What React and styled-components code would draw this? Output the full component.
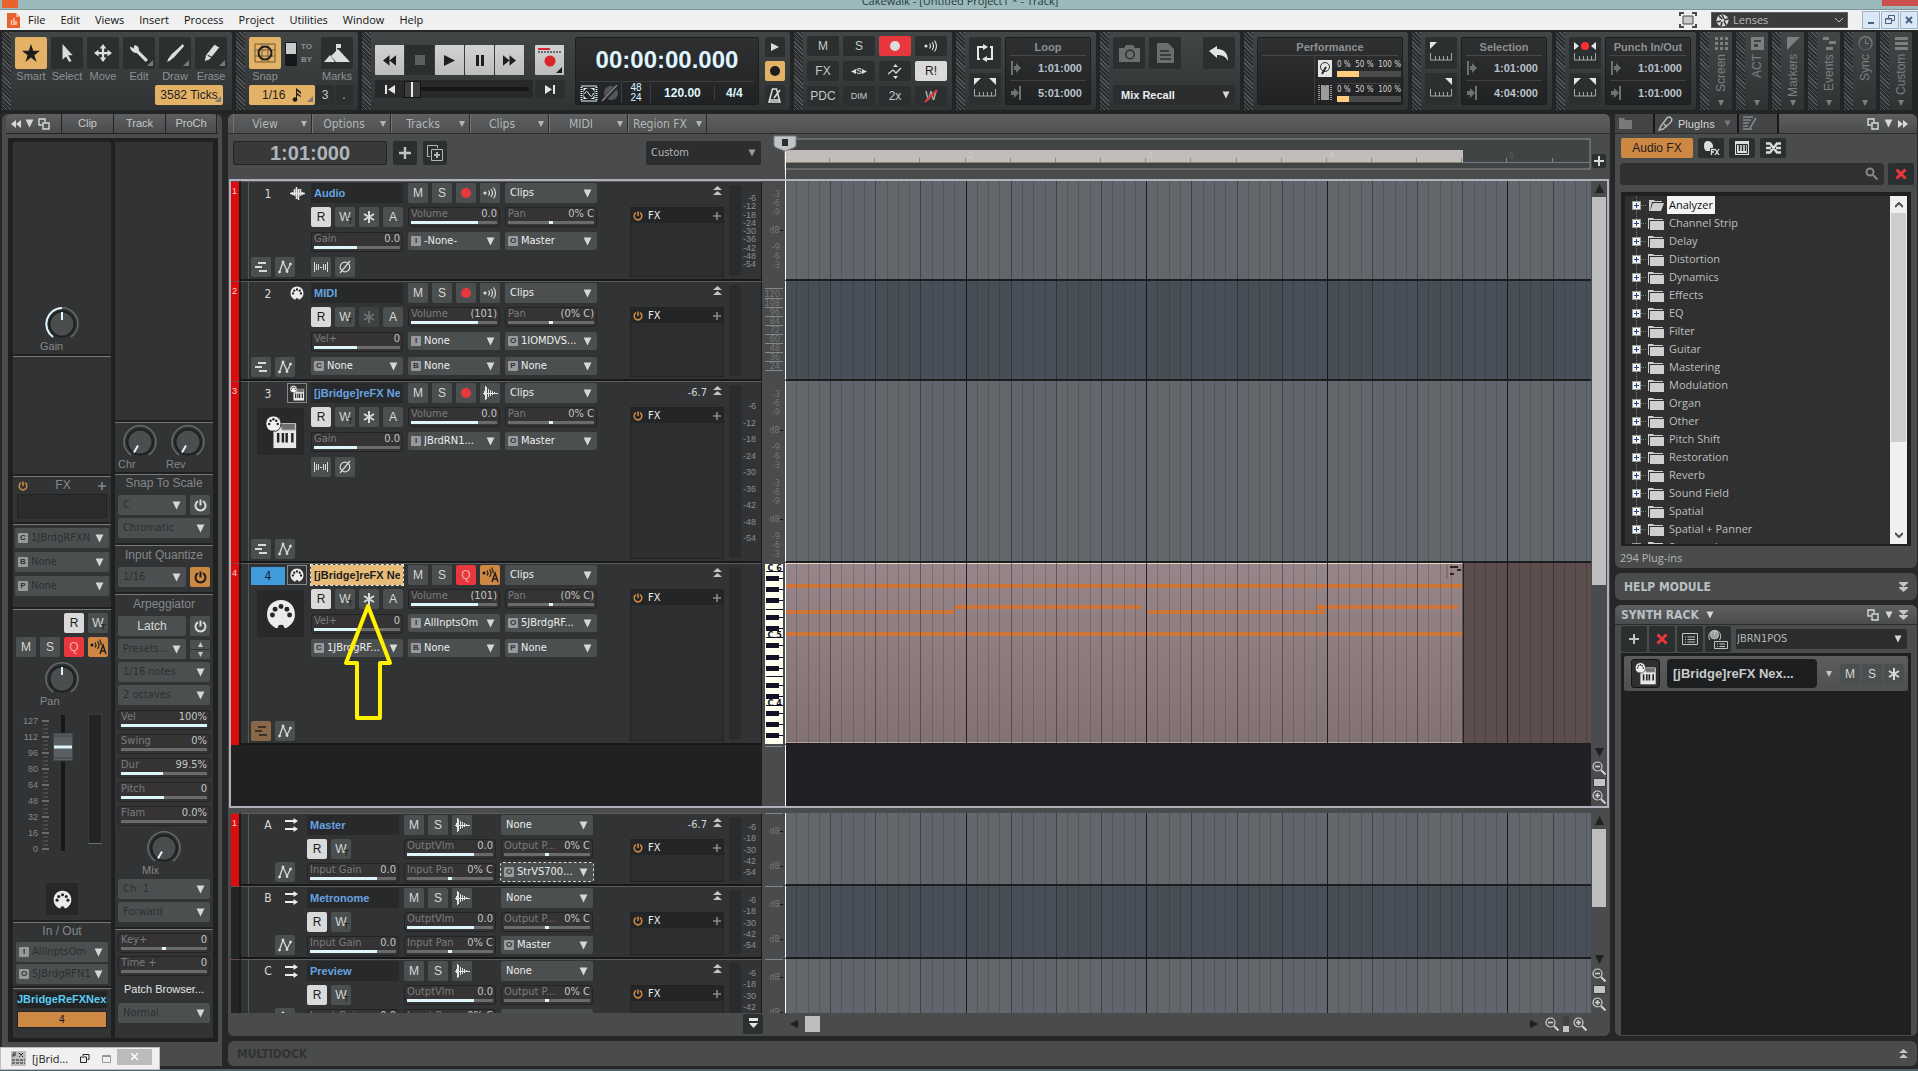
import React from "react";
import styled, { createGlobalStyle, css } from "styled-components";

const ui = `"DejaVu Sans Condensed", "Noto Sans", sans-serif`;
const arial = `"Liberation Sans", sans-serif`;
const segoe = `"Open Sans", "Noto Sans", sans-serif`;

const GlobalStyle = createGlobalStyle`
  * { box-sizing: border-box; }
  body {
    margin: 0;
    background: #262728;
    font-family: ${ui};
    font-size: 11px;
    color: #d4d6d6;
  }
  button, input, select {
    font: inherit;
    color: inherit;
    border: 0;
    margin: 0;
    padding: 0;
    background: none;
  }
  select { appearance: none; }
  svg { display: block; flex: none; }
`;

/* ---------- icons ---------- */

const Down = ({ s = 9, c = "#d6d8d8" }) => (
  <svg width={s} height={s} viewBox="0 0 8 8">
    <path d="M0.5 0.5h7L4 7.5z" fill={c} />
  </svg>
);

const Tri = ({ dir = "up", s = 10, c = "#1f2020" }) => {
  const d = {
    up: "M5 0L10 10H0z",
    down: "M0 0h10L5 10z",
    left: "M10 0v10L0 5z",
    right: "M0 0l10 5L0 10z",
  };
  return (
    <svg width={s} height={s} viewBox="0 0 10 10">
      <path d={d[dir]} fill={c} />
    </svg>
  );
};

const Power = ({ c = "#d8dada", s = 13 }) => (
  <svg width={s} height={s} viewBox="0 0 13 13" fill="none" stroke={c} strokeWidth="2">
    <path d="M4 2.2a5 5 0 1 0 5 0M6.5 0.5v6" />
  </svg>
);

const Plus = ({ c = "#d8dada", s = 10, w = 2 }) => (
  <svg width={s} height={s} viewBox="0 0 10 10" stroke={c} strokeWidth={w}>
    <path d="M5 0v10M0 5h10" />
  </svg>
);

const Cross = () => (
  <svg width="12" height="12" viewBox="0 0 12 12" stroke="#e8383d" strokeWidth="3">
    <path d="M1.5 1.5l9 9M10.5 1.5l-9 9" />
  </svg>
);

const Star = ({ c = "#d8dada" }) => (
  <svg width="12" height="12" viewBox="0 0 12 12" stroke={c} strokeWidth="2">
    <path d="M6 0v12M1 3l10 6M11 3L1 9" />
  </svg>
);

const Echo = ({ c = "#d8dada" }) => (
  <svg width="14" height="12" viewBox="0 0 14 12" fill="none" stroke={c} strokeWidth="1.2">
    <circle cx="2" cy="6" r="1.6" fill={c} stroke="none" />
    <path d="M5.5 3.5q2 2.5 0 5M8 2q3 4 0 8M10.5 0.5q4 5.5 0 11" />
  </svg>
);

const EchoAuto = () => (
  <svg width="17" height="16" viewBox="0 0 17 16" fill="none" stroke="#1d1d1d" strokeWidth="1.2">
    <circle cx="2" cy="6" r="1.6" fill="#1d1d1d" stroke="none" />
    <path d="M5 3.5q2 2.5 0 5M7.5 2q3 4 0 8M9.5 0.5q2 2.5 1.6 5.5" />
    <path d="M10 15L13 6l3 9M11 12h4" strokeWidth="1.4" />
  </svg>
);

const Wave = () => (
  <svg width="15" height="14" viewBox="0 0 15 14" stroke="#e4e6e6">
    <path d="M0 7.5h15M1.5 5v4M2.5 0v14M3.5 1v12M5.5 3v8M7.5 4v6M9.5 5v4M11.5 6v2" />
  </svg>
);

const AudioWave = () => (
  <svg width="15" height="14" viewBox="0 0 15 14" stroke="#e4e6e6">
    <path d="M0 7.5h15M2.5 6v3M4.5 3v7M6.5 1v12M8.5 3v11M10.5 3v7M12.5 6v3" strokeWidth="1.6" />
  </svg>
);

const Midi = ({ s = 14 }) => (
  <svg width={s} height={s} viewBox="0 0 28 28">
    <path d="M14 1C6 1 1 7 1 14.5 1 21 5 25 9 27h2q0-3 3-3t3 3h2c4-2 8-6 8-12.5C27 7 22 1 14 1z" fill="#ececec" />
    <g fill="#262728">
      <circle cx="6" cy="15" r="2.3" />
      <circle cx="8.5" cy="9.5" r="2.3" />
      <circle cx="14" cy="7" r="2.3" />
      <circle cx="19.5" cy="9.5" r="2.3" />
      <circle cx="22" cy="15" r="2.3" />
    </g>
  </svg>
);

const Synth = ({ s = 34 }) => (
  <svg width={s} height={s} viewBox="0 0 34 36">
    <path d="M9 9h24v26H9z" fill="#e8e8e8" />
    <path d="M16 9h16v7H18z" fill="#6d6f70" stroke="#b9baba" />
    <path d="M14 19v10M19 19v10M23 19v10M29 19v10" stroke="#242526" strokeWidth="2.6" />
    <path d="M9 1C4 1 1 5 1 9s2 7 5 8h6c3-1 5-4 5-8s-3-8-8-8z" fill="#f2f2f2" stroke="#262728" />
    <g fill="#262728">
      <circle cx="4.5" cy="9.5" r="1.3" />
      <circle cx="6" cy="6" r="1.3" />
      <circle cx="9" cy="4.5" r="1.3" />
      <circle cx="12" cy="6" r="1.3" />
      <circle cx="13.5" cy="9.5" r="1.3" />
    </g>
  </svg>
);

const Lanes = ({ c = "#d8dada" }) => (
  <svg width="12" height="10" viewBox="0 0 12 10" stroke={c} strokeWidth="2">
    <path d="M3 1h8M0 5h7M4 9h8" />
  </svg>
);

const Envelope = () => (
  <svg width="14" height="14" viewBox="0 0 14 14" stroke="#d8dada" fill="#d8dada">
    <path d="M1.5 12L5 2l4 9 3.5-7" fill="none" strokeWidth="1.3" />
    <circle cx="1.5" cy="12" r="1" />
    <circle cx="5" cy="2" r="1" />
    <circle cx="9" cy="11.5" r="1" />
    <circle cx="12.5" cy="4" r="1" />
  </svg>
);

const Interleave = () => (
  <svg width="14" height="10" viewBox="0 0 14 10" stroke="#d8dada">
    <path d="M0.5 0v10M2.5 2v6M4.5 2v6M6 5.5h2M9.5 2v6M11.5 2v6M13.5 0v10" fill="none" />
  </svg>
);

const Phase = () => (
  <svg width="12" height="14" viewBox="0 0 12 14" stroke="#d8dada" fill="none" strokeWidth="1.2">
    <circle cx="6" cy="7" r="4.8" />
    <path d="M1 13L11 1" />
  </svg>
);

const Bus = () => (
  <svg width="13" height="14" viewBox="0 0 13 14" stroke="#ececec" fill="#ececec">
    <path d="M0 3h9M0 11h9" strokeWidth="2" />
    <path d="M8.5 0L13 3 8.5 6zM8.5 8l4.5 3-4.5 3z" stroke="none" />
  </svg>
);

const Collapse = ({ down, c = "#c3c5c5" }) => (
  <svg width="9" height="10" viewBox="0 0 9 10" fill={c}>
    <path
      d={down ? "M0 0h9v1L4.5 5 0 1zM0 5h9v1L4.5 10 0 6z" : "M4.5 0L9 4H0zM4.5 5L9 9H0z"}
    />
  </svg>
);

const Windows = ({ c = "#d8dada" }) => (
  <svg width="12" height="12" viewBox="0 0 12 12" fill="none" stroke={c} strokeWidth="1.4">
    <path d="M4 7H1V1h6v3M5 5h6v6H5z" />
  </svg>
);

const Chevrons = ({ right, c = "#d8dada", s = 10 }) => (
  <svg width={s} height={s} viewBox="0 0 10 8" fill={c}>
    <path d={right ? "M0 0l5 4-5 4zM5 0l5 4-5 4z" : "M5 0v8L0 4zM10 0v8L5 4z"} />
  </svg>
);

const Zoom = ({ inside }) => (
  <svg width="14" height="14" viewBox="0 0 14 14" fill="none" stroke="#d0d2d2">
    <circle cx="5.5" cy="5.5" r="4.5" strokeWidth="1.2" />
    <path d="M9 9l4.5 4.5" strokeWidth="2" />
    <path d={inside ? "M3 5.5h5M5.5 3v5" : "M3 5.5h5"} strokeWidth="1.6" />
  </svg>
);

const Folder = ({ open }) => (
  <svg width="17" height="13" viewBox="0 0 17 13">
    {open ? (
      <>
        <path d="M1 12V1h5l1 1h7v1H4L2 12z" fill="#cfcfcf" />
        <path d="M5 4h11l-3 8H2z" fill="#cfcfcf" />
      </>
    ) : (
      <>
        <path d="M0 12V1h5l1 1h9v1H1v9z" fill="#cfcfcf" />
        <path d="M2 4h14v9H2z" fill="#cfcfcf" />
      </>
    )}
  </svg>
);

const Edge = ({ end }) => (
  <svg width="10" height="14" viewBox="0 0 10 14" fill="#6f7273">
    {end ? <path d="M0 5h3V2l5 5-5 5V9H0zM8 0h2v14H8z" /> : <path d="M0 0h2v14H0zM3 5h2V2l5 5-5 5V9H3z" />}
  </svg>
);

const RangeIcon = ({ left, right, dot }) => (
  <svg width="22" height="22" viewBox="0 0 22 22">
    {left && <path d={dot ? "M0 0l5 4-5 4z" : "M0 0h7L0 7z"} fill="#e4e6e6" />}
    {right && <path d={dot ? "M22 0l-5 4 5 4z" : "M22 0h-7l7 7z"} fill="#e4e6e6" />}
    {dot && <circle cx="11" cy="4" r="4" fill="#ff2d32" />}
    <path d="M0.5 11v7h21v-7M5.5 14v4M9.5 14v4M13.5 14v4M17.5 14v4" stroke="#a7a9a9" fill="none" />
  </svg>
);

/* ---------- shared controls ---------- */

const Pad = styled.button`
  width: ${(p) => p.$w || 20}px;
  height: ${(p) => p.$h || 20}px;
  flex: none;
  display: flex;
  align-items: center;
  justify-content: center;
  border-radius: 2px;
  position: relative;
  font-family: ${arial};
  font-size: 12px;
  color: #d6d8d8;
  background: #4c4f50;
  ${(p) =>
    p.$tone &&
    {
      lit: css`background: #dadada; color: #1d1d1d;`,
      red: css`background: #e8383d; color: #f7a9a9;`,
      orange: css`background: #cd8843; color: #1d1d1d;`,
      sand: css`background: #e4b266; color: #1d1d1d;`,
      brown: css`background: #8a6746; color: #4a3c30;`,
      dark: css`background: #2c2f30; color: #c6c8c8;`,
      off: css`background: #3e4142; color: #6c6f70;`,
    }[p.$tone]}
`;

const RecDot = styled.span`
  width: 10px;
  height: 10px;
  border-radius: 50%;
  background: ${(p) => p.$c || "#e8383d"};
`;

const Trim = styled.sub`
  position: absolute;
  right: 2px;
  bottom: 1px;
  font-size: 9px;
  line-height: 9px;
  color: #232425;
`;

const SelectBox = styled.span`
  display: flex;
  align-items: center;
  gap: 3px;
  height: ${(p) => p.$h || 20}px;
  min-width: 0;
  flex: ${(p) => (p.$grow ? 1 : "none")};
  padding: 0 5px 0 ${(p) => (p.$badge ? 3 : 5)}px;
  border-radius: 2px;
  background: ${(p) => (p.$dark ? "#2b2d2e" : "#4c4f50")};
  color: ${(p) => (p.$dim ? "#2c2f31" : "#eceeee")};
  outline: ${(p) => (p.$focus ? "1px dashed #d4d6d6" : "none")};
  select {
    flex: 1;
    min-width: 0;
    width: 20px;
    line-height: 16px;
    white-space: nowrap;
  }
`;

const Badge = styled.b`
  width: 10px;
  height: 10px;
  flex: none;
  border-radius: 1px;
  background: #97999a;
  color: #323334;
  font: bold 8px/10px ${arial};
  text-align: center;
`;

const Select = ({ badge, value, label, ...rest }) => (
  <SelectBox $badge={badge} {...rest}>
    {badge && <Badge>{badge}</Badge>}
    <select aria-label={label || value}>
      <option>{value}</option>
    </select>
    <Down />
  </SelectBox>
);

const SliderBox = styled.div`
  height: 20px;
  min-width: 0;
  padding: 0 2px;
  border: 1px solid #222324;
  border-radius: 3px;
  background: #353334;
  div {
    display: flex;
    justify-content: space-between;
    height: 13px;
    line-height: 11px;
    white-space: nowrap;
  }
  label { color: #7a7d7e; }
  output { color: #c3c5c5; }
  input {
    display: block;
    appearance: none;
    width: 100%;
    height: 3px;
    background: linear-gradient(
      90deg,
      #6b6b6b ${(p) => p.$from}%,
      #dff5fc ${(p) => p.$from}%,
      #dff5fc ${(p) => p.$to}%,
      #6b6b6b ${(p) => p.$to}%
    );
  }
  input::-webkit-slider-thumb {
    appearance: none;
    width: 1px;
    height: 1px;
  }
`;

const Slider = ({ name, value, from = 0, to = 50 }) => {
  const id = React.useId();
  return (
    <SliderBox $from={from} $to={to}>
      <div>
        <label htmlFor={id}>{name}</label>
        <output>{value}</output>
      </div>
      <input id={id} type="range" defaultValue={to} />
    </SliderBox>
  );
};

/* ---------- title and menu ---------- */

const TitleBar = styled.header`
  height: 10px;
  overflow: hidden;
  display: flex;
  justify-content: space-between;
  background: #9bb8bb;
  border-bottom: 1px solid #7d9698;
  color: #26383a;
  font: 11px/17px ${segoe};
  h1 {
    margin: -8px 0 0 20px;
    font: inherit;
  }
`;

const AppIcon = styled.span`
  width: 16px;
  height: 8px;
  margin-left: 2px;
  background: #e8622c;
`;

const CloseStub = styled.span`
  width: 36px;
  height: 6px;
  background: #c9504f;
`;

const MenuBar = styled.nav`
  height: 20px;
  display: flex;
  align-items: center;
  gap: 8px;
  padding-left: 7px;
  background: #f0f0f0;
  color: #111;
  font: 11px/18px ${segoe};
`;

const MenuLinks = styled.div`
  display: flex;
  gap: 15px;
  a {
    color: inherit;
    text-decoration: none;
  }
`;

const LensGroup = styled.div`
  margin-left: auto;
  display: flex;
  align-items: center;
  gap: 14px;
`;

const LensBox = styled.span`
  width: 137px;
  height: 16px;
  display: flex;
  align-items: center;
  gap: 4px;
  padding: 0 4px;
  background: #3b3b3b;
  border: 1px solid #5d5d5d;
  color: #bcbcbc;
  select { flex: 1; }
`;

const WinButtons = styled.div`
  display: flex;
  gap: 1px;
  button {
    width: 18px;
    height: 18px;
    border: 1px solid #9eb4c8;
    background: #dbe8f5;
    display: flex;
    align-items: center;
    justify-content: center;
  }
`;

const menus = ["File", "Edit", "Views", "Insert", "Process", "Project", "Utilities", "Window", "Help"];

const Menu = () => (
  <MenuBar>
    <svg width="13" height="16" viewBox="0 0 13 16">
      <path d="M0 1h9l4 4v11H0z" fill="#e8622c" />
      <path d="M9 1v4h4z" fill="#f6b294" />
      <path d="M4.5 8v5M7 6v7M9 9v4" stroke="#fbd6c4" strokeWidth="1.4" />
    </svg>
    <MenuLinks>
      {menus.map((m) => (
        <a href="#menu" key={m}>{m}</a>
      ))}
    </MenuLinks>
    <LensGroup>
      <svg width="18" height="16" viewBox="0 0 18 16" fill="none" stroke="#4a4a4a" strokeWidth="2">
        <path d="M1 4V1h4M13 1h4v3M17 12v3h-4M5 15H1v-3" />
        <path d="M4 4h10v8H4z" fill="#c9c9c9" strokeWidth="1" />
      </svg>
      <LensBox>
        <svg width="13" height="13" viewBox="0 0 13 13">
          <circle cx="6.5" cy="6.5" r="6" fill="#d8d8d8" />
          <path d="M6 1l2 4M12 5L8 6M10 11L8 7M5 12l1-4M1 8l4-1M3 2l3 3" stroke="#3b3b3b" strokeWidth="1.6" />
        </svg>
        <select aria-label="Lenses">
          <option>Lenses</option>
        </select>
        <svg width="8" height="5" viewBox="0 0 8 5" fill="none" stroke="#bcbcbc">
          <path d="M0 0l4 4 4-4" />
        </svg>
      </LensBox>
      <WinButtons>
        <button aria-label="Minimize">
          <svg width="8" height="8"><path d="M1 7h6" stroke="#47617e" strokeWidth="2" /></svg>
        </button>
        <button aria-label="Restore">
          <svg width="10" height="10" fill="none" stroke="#47617e">
            <path d="M3.5 3V0.5h6v5H7M0.5 3.5h6v5h-6zM0 4h7" />
          </svg>
        </button>
        <button aria-label="Close">
          <svg width="8" height="8" stroke="#47617e" strokeWidth="2"><path d="M1 1l6 6M7 1L1 7" /></svg>
        </button>
      </WinButtons>
    </LensGroup>
  </MenuBar>
);

/* ---------- control bar ---------- */

const Bar = styled.section`
  display: flex;
  gap: 4px;
  padding: 2px 2px 4px;
  background: #232425;
  font-family: ${arial};
`;

const ModuleBox = styled.div`
  display: flex;
  width: ${(p) => p.$w}px;
  height: 78px;
  flex: none;
  border-radius: 2px;
  background: linear-gradient(#434647, #303334);
`;

const Grip = styled.span`
  width: 9px;
  flex: none;
  background: repeating-linear-gradient(45deg, #55585a 0 1px, #2b2d2e 1px 3px);
`;

const ModuleBody = styled.div`
  flex: 1;
  display: flex;
  padding: 5px 5px 5px 4px;
  gap: 4px;
  min-width: 0;
`;

const Module = ({ w, children }) => (
  <ModuleBox $w={w}>
    <Grip />
    <ModuleBody>{children}</ModuleBody>
  </ModuleBox>
);

const Stack = styled.div`
  display: flex;
  flex-direction: column;
  gap: ${(p) => p.$gap || 0}px;
  align-items: ${(p) => p.$align || "stretch"};
  justify-content: ${(p) => p.$justify || "flex-start"};
  flex: ${(p) => (p.$grow ? 1 : "none")};
  min-width: 0;
`;

const Line = styled.div`
  display: flex;
  align-items: ${(p) => p.$align || "center"};
  gap: ${(p) => p.$gap || 0}px;
  justify-content: ${(p) => p.$justify || "flex-start"};
`;

const ToolCell = styled.div`
  width: 32px;
  display: flex;
  flex-direction: column;
  align-items: center;
  font-size: 11px;
  line-height: 14px;
  color: #8d9091;
`;

const TickLine = styled(Line)`
  padding-right: 4px;
`;

const Corner = styled.i`
  position: absolute;
  right: 2px;
  bottom: 3px;
  border: 3px solid transparent;
  border-right-color: #77797a;
  border-bottom-color: #77797a;
`;

const Display = styled.div`
  flex: 1;
  min-width: 0;
  height: 68px;
  padding: 3px 4px;
  border: 1px solid #1d1e1f;
  border-radius: 2px;
  background: linear-gradient(#2f3031, #212223);
  h2 {
    margin: 0;
    height: 15px;
    border-bottom: 1px solid #454748;
    font: bold 11px/13px ${arial};
    color: #8d9091;
    text-align: center;
  }
`;

const ClockDisplay = styled(Display)`
  margin: 0 2px 0 6px;
`;

const TimeRow = styled.div`
  display: flex;
  align-items: center;
  justify-content: space-between;
  height: 24px;
  padding: 0 4px 0 1px;
  font-weight: bold;
  font-size: 11px;
  color: #b9c3cb;
  & + & { border-top: 1px solid #3d3f40; }
`;

const TimeDisplay = ({ title, from, to }) => (
  <Display>
    <h2>{title}</h2>
    <TimeRow><Edge />{from}</TimeRow>
    <TimeRow><Edge end />{to}</TimeRow>
  </Display>
);

const tools = [
  ["Smart", "M8 0l2 6h6l-5 4 2 6-5-4-5 4 2-6-5-4h6z"],
  ["Select", "M4 0l9 10H9l3 5-2 1-3-5-3 3z"],
  ["Move", "M8 0l3 4H9v3h3V5l4 3-4 3V9H9v3h2l-3 4-3-4h2V9H4v2L0 8l4-3v2h3V4H5z"],
  ["Edit", "M0 2l3 2 1-3c3 0 4 2 4 5l8 8-2 2-8-8C3 8 0 6 0 2z"],
  ["Draw", "M15 0l1 2L7 12l-4 3-2 1 1-3 3-4z"],
  ["Erase", "M11 0l5 3-9 11-5 2 1-6zM5 10l4 2"],
];

const SnapToggle = styled.button`
  width: 12px;
  height: 24px;
  margin-top: 5px;
  padding: 1px;
  border-radius: 1px;
  background: #17181a;
  display: block;
  span {
    display: block;
    height: 11px;
    margin-bottom: 11px;
    background: #c9caca;
  }
`;

const ToBy = styled.div`
  margin-top: 3px;
  width: 16px;
  font-size: 8px;
  line-height: 13px;
  font-weight: bold;
  color: #8d9091;
`;

const Transport = styled.div`
  display: flex;
  margin-top: 8px;
`;

const Play = styled(Pad)`
  width: 30px;
  height: 30px;
  border-radius: 1px;
  border-right: 1px solid #3a3d3e;
  background: ${(p) => (p.$stop ? "#2c2f30" : "linear-gradient(#d2d2d2, #bdbdbd)")};
`;

const RecordGap = styled.span`
  width: 10px;
`;

const Seek = styled.div`
  display: flex;
  align-items: center;
  gap: 9px;
  width: 158px;
  height: 18px;
  padding: 0 4px 0 10px;
  background: #27292a;
  input {
    appearance: none;
    flex: 1;
    min-width: 0;
    height: 4px;
    background: #161718;
    border-radius: 2px;
  }
  input::-webkit-slider-thumb {
    appearance: none;
    width: 17px;
    height: 17px;
    border: 1px solid #141515;
    background: linear-gradient(90deg, #3b3d3e 6px, #e8e8e8 6px 8px, #3b3d3e 8px);
  }
`;

const Clock = styled.time`
  display: block;
  height: 41px;
  border-bottom: 1px solid #3d3f40;
  font: bold 24px/38px ${arial};
  color: #dff5ff;
  text-align: center;
`;

const Tempo = styled.div`
  display: flex;
  align-items: center;
  gap: 2px;
  height: 22px;
  font-weight: bold;
  font-size: 12px;
  color: #dff5ff;
  small {
    width: 30px;
    font: 10px/10px ${arial};
    text-align: center;
    border: solid #3d3f40;
    border-width: 0 1px;
  }
  span {
    flex: 3;
    text-align: center;
  }
  span:last-child {
    flex: 2;
    border-left: 1px solid #3d3f40;
  }
`;

const MixGrid = styled.div`
  display: grid;
  grid-template-columns: repeat(4, 32px);
  grid-auto-rows: 20px;
  gap: 5px 4px;
  margin-top: -1px;
`;

const SmallPad = styled(Pad)`
  font-size: 9px;
`;

const UndoPad = styled(Pad)`
  margin-left: auto;
`;

const Strike = styled.svg`
  position: absolute;
`;

const Recall = styled(SelectBox)`
  width: 122px;
  padding-left: 8px;
  font-weight: bold;
  font-family: ${arial};
`;

const PerfRow = styled.div`
  display: flex;
  align-items: center;
  gap: 5px;
  height: 24px;
  margin-left: 52px;
  border-left: 1px solid #3d3f40;
  padding-left: 3px;
  & + & > div { border-top: 1px solid #3d3f40; }
  p {
    margin: 0;
    display: flex;
    justify-content: space-between;
    font: 8px/12px ${ui};
    color: #d4d6d6;
  }
`;

const Load = styled.progress`
  display: block;
  width: 64px;
  height: 6px;
  appearance: none;
  background: #4a4b4c;
  &::-webkit-progress-bar { background: #4a4b4c; }
  &::-webkit-progress-value { background: #ffcb7d; }
`;

const Side = styled.button`
  flex: 1;
  display: flex;
  flex-direction: column;
  align-items: center;
  justify-content: space-between;
  padding: 4px 2px 4px 3px;
  font: 12px/15px ${arial};
  color: #7b7f80;
  span {
    flex: 1;
    margin-top: 3px;
    writing-mode: vertical-rl;
    transform: rotate(180deg);
    text-align: right;
  }
`;

const sideModules = [
  ["Screen", "M1 1h3v3H1zM6 1h3v3H6zM11 1h3v3h-3zM1 6h3v3H1zM6 6h3v3H6zM11 6h3v3h-3zM1 11h3v3H1zM6 11h3v3H6zM11 11h3v3h-3z"],
  ["ACT", "M1 1h13v13H1zM4 4v2h7V4zM4 8v3h4V8z"],
  ["Markers", "M1 1h13L1 14z"],
  ["Events", "M1 1h6v3H1zM7 5h7v3H7zM4 11h7v3H4z"],
  ["Sync", "M7.5 0a7 7 0 1 0 .1 0zM7.5 1.5a6 6 0 1 1-.1 0zM7 3h1v4h3v1H7z"],
  ["Custom", "M1 1h13v3H1zM1 6h13v3H1zM1 11h13v3H1z"],
];

const ControlBar = () => (
  <Bar>
    <Module w={230}>
      <Stack $grow $gap={2}>
        <Line $gap={4}>
          {tools.map(([name, d], i) => (
            <ToolCell key={name}>
              <Pad $w={32} $h={32} $tone={i ? "dark" : "sand"} aria-label={name}>
                <svg width="18" height="18" viewBox="0 0 16 16">
                  <path d={d} fill={i ? "#dcdede" : "#1d1d1d"} stroke={name === "Erase" ? "#2c2f30" : "none"} />
                </svg>
                {i > 2 && <Corner />}
              </Pad>
              {name}
            </ToolCell>
          ))}
        </Line>
        <TickLine $justify="flex-end">
          <Pad $w={68} $tone="sand">3582 Ticks<Corner /></Pad>
        </TickLine>
      </Stack>
    </Module>

    <Module w={122}>
      <Stack $grow $gap={2}>
        <Line $align="flex-start" $gap={4}>
          <ToolCell>
            <Pad $w={32} $h={32} $tone="sand" aria-label="Snap">
              <svg width="22" height="20" viewBox="0 0 22 20" fill="none" stroke="#1d1d1d">
                <path d="M1 1h20v18H1zM1 7h20M1 13h20M8 1v18M14 1v18" stroke="#6d5a3a" />
                <circle cx="11" cy="10" r="6.5" strokeWidth="2" />
              </svg>
            </Pad>
            Snap
          </ToolCell>
          <SnapToggle aria-label="Snap to or by"><span /></SnapToggle>
          <ToBy>TO<br />BY</ToBy>
          <ToolCell>
            <Pad $w={32} $h={32} $tone="dark" aria-label="Marks">
              <svg width="26" height="20" viewBox="0 0 26 20" fill="#dcdede">
                <path d="M0 19l6-7 5 7zM7 13l7-7 12 13H12zM12 1h5v4h-4v3h-1z" />
              </svg>
            </Pad>
            Marks
          </ToolCell>
        </Line>
        <Line $gap={1}>
          <Pad $w={66} $tone="sand">
            1/16&nbsp;&nbsp;
            <svg width="10" height="14" viewBox="0 0 10 14">
              <path d="M4 11V0l5 4v2L5 3v2l4 3v1L5 7v5" fill="#1d1d1d" />
              <circle cx="3" cy="11.5" r="2.3" fill="#1d1d1d" />
            </svg>
            <Corner />
          </Pad>
          <Pad $w={18} $tone="dark">3</Pad>
          <Pad $w={18} $tone="dark">.</Pad>
        </Line>
      </Stack>
    </Module>

    <Module w={428}>
      <Stack $gap={5}>
        <Transport>
          <Play aria-label="Rewind"><Chevrons c="#1d1d1d" s={13} /></Play>
          <Play $stop aria-label="Stop">
            <svg width="10" height="10"><path d="M0 0h10v10H0z" fill="#5c5f60" /></svg>
          </Play>
          <Play aria-label="Play"><Tri dir="right" s={11} /></Play>
          <Play aria-label="Pause">
            <svg width="8" height="11"><path d="M0 0h3v11H0zM5 0h3v11H5z" fill="#1d1d1d" /></svg>
          </Play>
          <Play aria-label="Forward"><Chevrons right c="#1d1d1d" s={13} /></Play>
          <RecordGap />
          <Play aria-label="Record">
            <svg width="26" height="26" viewBox="0 0 26 26">
              <path d="M1 2h12" stroke="#d8262b" strokeWidth="2" />
              <path d="M1 5h24" stroke="#6b6d6e" strokeWidth="2" strokeDasharray="2 1" />
              <circle cx="13" cy="14" r="5.5" fill="#d8262b" />
              <path d="M25 20v6h-6z" fill="#1d1d1d" />
            </svg>
          </Play>
        </Transport>
        <Line $gap={2}>
          <Seek>
            <svg width="10" height="9" fill="#e4e6e6"><path d="M0 0h2v9H0zM10 0v9L3 4.5z" /></svg>
            <input type="range" aria-label="Song position" defaultValue="0" />
          </Seek>
          <Pad $w={30} $h={18} $tone="dark" aria-label="Go to end">
            <svg width="10" height="9" fill="#e4e6e6"><path d="M8 0h2v9H8zM0 0v9l7-4.5z" /></svg>
          </Pad>
        </Line>
      </Stack>
      <ClockDisplay>
        <Clock>00:00:00.000</Clock>
        <Tempo>
          <svg width="18" height="17" viewBox="0 0 17 17" fill="none">
            <path d="M1 1h15v15H1z" stroke="#dff5ff" strokeWidth="2" strokeDasharray="1 1" />
            <path d="M3 3h11v11H3z" fill="#dff5ff" />
            <circle cx="8.5" cy="8.5" r="5.5" fill="#242526" />
            <path d="M4 9q2-5 4.5 0t4.5-1" stroke="#dff5ff" />
          </svg>
          <svg width="19" height="17" viewBox="0 0 19 17">
            <circle cx="11" cy="8" r="7" fill="#55585a" />
            <path d="M3 16L17 1" stroke="#242526" strokeWidth="4" />
            <path d="M2 16L17 0" stroke="#85888a" strokeWidth="1.5" />
          </svg>
          <small>48<br />24</small>
          <span>120.00</span>
          <span>4/4</span>
        </Tempo>
      </ClockDisplay>
      <Stack $gap={4}>
        <Pad $tone="dark" aria-label="Play metronome"><Tri dir="right" s={8} c="#dcdede" /></Pad>
        <Pad $tone="sand" aria-label="Record metronome"><RecDot $c="#1d1d1d" /></Pad>
        <Pad $tone="dark" aria-label="Metronome">
          <svg width="14" height="15" viewBox="0 0 14 15" fill="none" stroke="#dcdede" strokeWidth="1.5">
            <path d="M4.5 1h4L12 14H1zM6 10l6-8M2 12h10" />
          </svg>
        </Pad>
      </Stack>
    </Module>

    <Module w={158}>
      <MixGrid>
        <Pad $w={32} $tone="dark">M</Pad>
        <Pad $w={32} $tone="dark">S</Pad>
        <Pad $w={32} $tone="red" aria-label="Arm"><RecDot $c="#dcdcdc" /></Pad>
        <Pad $w={32} $tone="dark" aria-label="Input echo"><Echo /></Pad>
        <Pad $w={32} $tone="dark">FX</Pad>
        <SmallPad $w={32} $tone="dark" aria-label="Solo override">
          <Tri dir="left" s={5} c="#dcdede" /><b>S</b><Tri dir="right" s={5} c="#dcdede" />
        </SmallPad>
        <Pad $w={32} $tone="dark" aria-label="Offset">
          <svg width="14" height="15" viewBox="0 0 14 15" fill="#dcdede">
            <path d="M5 3l2.5-3L10 3zM5 12h5l-2.5 3z" />
            <path d="M0 10l5-4 3 3 5-5" fill="none" stroke="#dcdede" strokeWidth="1.3" />
          </svg>
        </Pad>
        <Pad $w={32} $tone="lit">R!</Pad>
        <Pad $w={32} $tone="dark">PDC</Pad>
        <SmallPad $w={32} $tone="dark">DIM</SmallPad>
        <Pad $w={32} $tone="dark">2x</Pad>
        <Pad $w={32} $tone="dark" aria-label="Write off">
          W
          <Strike width="16" height="14"><path d="M2 13L14 1" stroke="#e8383d" strokeWidth="2" /></Strike>
        </Pad>
      </MixGrid>
    </Module>

    <Module w={140}>
      <Stack $gap={4}>
        <Pad $w={32} $h={32} $tone="dark" aria-label="Loop">
          <svg width="20" height="18" viewBox="0 0 18 18" fill="none" stroke="#e4e6e6" strokeWidth="2">
            <path d="M8 3H2v12h2M14 3h2v12h-6" />
            <path d="M7 0l5 3-5 3zM11 12l-5 3 5 3z" fill="#e4e6e6" stroke="none" />
          </svg>
        </Pad>
        <Pad $w={32} $h={32} $tone="dark" aria-label="Loop selection"><RangeIcon left right /></Pad>
      </Stack>
      <TimeDisplay title="Loop" from="1:01:000" to="5:01:000" />
    </Module>

    <Module w={140}>
      <Stack $grow $justify="space-between">
        <Line $gap={4}>
          <Pad $w={32} $h={32} $tone="dark" aria-label="Snapshot">
            <svg width="21" height="17" viewBox="0 0 21 17" fill="#6b6e6f">
              <path d="M0 3h5l2-3h7l2 3h5v14H0z" />
              <circle cx="11" cy="9.5" r="5" fill="#2c2f30" />
              <circle cx="11" cy="9.5" r="3.5" />
            </svg>
          </Pad>
          <Pad $w={32} $h={32} $tone="dark" aria-label="Notes">
            <svg width="17" height="20" viewBox="0 0 17 20">
              <path d="M0 0h11l6 6v14H0z" fill="#6b6e6f" />
              <path d="M3 8h9M3 12h11M3 16h11" stroke="#2c2f30" strokeWidth="1.5" />
            </svg>
          </Pad>
          <UndoPad $w={32} $h={32} $tone="dark" aria-label="Undo">
            <svg width="20" height="15" viewBox="0 0 20 15" fill="#e4e6e6">
              <path d="M0 5l8-5v3c8 0 11 5 11 12-2-4-5-6-11-6v3z" />
            </svg>
          </UndoPad>
        </Line>
        <Recall $dark>
          <select aria-label="Mix Recall"><option>Mix Recall</option></select>
          <Down s={8} />
        </Recall>
      </Stack>
    </Module>

    <Module w={164}>
      <Display>
        <h2>Performance</h2>
        <PerfRow>
          <svg width="14" height="17" viewBox="0 0 14 17">
            <path d="M0 0h14v17H0z" fill="#e4e6e6" />
            <circle cx="7" cy="7" r="4.5" fill="none" stroke="#2a2b2c" />
            <path d="M4 14l4-7" stroke="#2a2b2c" strokeWidth="2" />
          </svg>
          <div>
            <p><span>0 %</span><span>50 %</span><span>100 %</span></p>
            <Load value="0.34" aria-label="Disk load" />
          </div>
        </PerfRow>
        <PerfRow>
          <svg width="14" height="17" viewBox="0 0 14 17">
            <path d="M3 1h3l1 1 1-1h3v15H3z" fill="#9a9c9c" />
            <path d="M1 1v15M13 1v15" stroke="#9a9c9c" strokeWidth="2" strokeDasharray="1 1" />
          </svg>
          <div>
            <p><span>0 %</span><span>50 %</span><span>100 %</span></p>
            <Load value="0.18" aria-label="CPU load" />
          </div>
        </PerfRow>
      </Display>
    </Module>

    <Module w={140}>
      <Stack $gap={4}>
        <Pad $w={32} $h={32} $tone="dark" aria-label="Selection from"><RangeIcon left /></Pad>
        <Pad $w={32} $h={32} $tone="dark" aria-label="Selection thru"><RangeIcon right /></Pad>
      </Stack>
      <TimeDisplay title="Selection" from="1:01:000" to="4:04:000" />
    </Module>

    <Module w={140}>
      <Stack $gap={4}>
        <Pad $w={32} $h={32} $tone="dark" aria-label="Punch"><RangeIcon left right dot /></Pad>
        <Pad $w={32} $h={32} $tone="dark" aria-label="Punch range"><RangeIcon left right /></Pad>
      </Stack>
      <TimeDisplay title="Punch In/Out" from="1:01:000" to="1:01:000" />
    </Module>

    {sideModules.map(([name, d]) => (
      <ModuleBox $w={32} key={name}>
        <Grip />
        <Side>
          <svg width="15" height="15" viewBox="0 0 15 15" fillRule="evenodd">
            <path d={d} fill="#7b7f80" />
          </svg>
          <span>{name}</span>
          <Tri dir="down" s={6} c="#7b7f80" />
        </Side>
      </ModuleBox>
    ))}
  </Bar>
);

/* ---------- inspector ---------- */

const Inspector = styled.aside`
  width: 220px;
  flex: none;
  display: flex;
  flex-direction: column;
  border-radius: 6px 6px 0 0;
  background: #4a4c4b;
`;

const InspectorTabs = styled.div`
  height: 20px;
  display: flex;
  margin: 0 4px;
  border-bottom: 1px solid #222324;
  border-radius: 6px 6px 0 0;
  background: linear-gradient(#5d5f61, #4a4c4d);
  div {
    width: 55px;
    display: flex;
    align-items: center;
    gap: 4px;
    padding-left: 5px;
  }
  button {
    width: 52px;
    border-left: 1px solid #222324;
    font: 11px/19px ${arial};
    color: #c6c8c8;
  }
  button:last-child { border-right: 1px solid #222324; }
`;

const Strips = styled.div`
  flex: 1;
  display: flex;
  gap: 4px;
  margin: 4px 4px 24px 6px;
  padding: 4px 5px;
  background: #1f2020;
`;

const StripCol = styled.div`
  flex: 1;
  min-width: 0;
  display: flex;
  flex-direction: column;
  gap: 2px;
`;

const Sect = styled.section`
  display: flex;
  flex-direction: column;
  gap: ${(p) => p.$gap || 0}px;
  flex: ${(p) => (p.$grow ? 1 : "none")};
  justify-content: ${(p) => (p.$grow ? "flex-end" : "flex-start")};
  min-height: ${(p) => p.$min || 0}px;
  padding: ${(p) => p.$pad || "0 3px 5px"};
  border-top: 1px solid ${(p) => (p.$grow ? "#323334" : "#77797a")};
  background: #323334;
  h3 {
    margin: 0;
    font: 12px/17px ${arial};
    color: #85888a;
    text-align: center;
  }
`;

const KnobBox = styled.figure`
  margin: 0 auto;
  width: 36px;
  figcaption {
    margin-left: -4px;
    font: 11px/12px ${arial};
    color: #85888a;
  }
`;

const Knob = ({ name, angle = 0, arc }) => (
  <KnobBox>
    <svg width="36" height="34" viewBox="0 0 36 34" fill="none">
      <path d="M9 31A16 16 0 1 1 27 31" stroke="#66696a" strokeWidth="1.6" />
      {arc && <path d="M9 31A16 16 0 0 1 18 2" stroke="#dff5ff" strokeWidth="2" />}
      <circle cx="18" cy="18" r="13.5" fill="#1e1f20" />
      <circle cx="18" cy="18" r="11.5" fill="#4b4e4f" />
      <path d="M18 6v8" stroke="#dff5ff" strokeWidth="2" transform={`rotate(${angle} 18 18)`} />
    </svg>
    <figcaption>{name}</figcaption>
  </KnobBox>
);

const FxHead = styled.div`
  display: flex;
  justify-content: space-between;
  align-items: center;
  height: 17px;
  padding: 0 2px;
  font: 12px/17px ${arial};
  color: #85888a;
`;

const FxSlot = styled.div`
  height: 24px;
  margin: 0 1px;
  border: 1px solid #222324;
  background: #2b2c2d;
`;

const FaderArea = styled.div`
  display: flex;
  height: 146px;
  padding-left: 8px;
`;

const FaderScale = styled.svg`
  overflow: visible;
  text {
    font: 9px ${arial};
    fill: #85888a;
    text-anchor: end;
  }
`;

const FaderMeter = styled.div`
  width: 14px;
  flex: none;
  height: 130px;
  margin: 3px 0 0 3px;
  border: 1px solid #3a3b3c;
  border-bottom-color: #6c6f70;
  background: #232425;
`;

const MidiTile = styled.div`
  width: 32px;
  height: 32px;
  margin: 22px auto 4px;
  display: flex;
  align-items: center;
  justify-content: center;
  background: #262728;
`;

const StripName = styled.div`
  height: 17px;
  margin: 0 1px;
  overflow: hidden;
  white-space: nowrap;
  background: #232425;
  color: #5ccdf5;
  font: bold 11px/17px ${arial};
`;

const StripNumber = styled.div`
  height: 17px;
  margin: 3px 1px 3px;
  background: #cd8843;
  color: #1d1d1d;
  text-align: center;
  line-height: 15px;
  border: 1px solid #222324;
`;

const Spin = styled.div`
  display: flex;
  flex-direction: column;
  gap: 1px;
  button {
    width: 20px;
    height: 9px;
    display: flex;
    align-items: center;
    justify-content: center;
    background: #4c4f50;
  }
`;

const ArpSliders = styled(Stack)`
  margin: 2px 0 1px;
`;

const Patch = styled.button`
  height: 21px;
  font: 11px/21px ${arial};
  color: #e4e6e6;
  text-align: center;
`;

const faderMarks = [127, 112, 96, 80, 64, 48, 32, 16, 0];

const InspectorPane = () => (
  <Inspector>
    <InspectorTabs>
      <div><Chevrons /><Down /><Windows /></div>
      <button>Clip</button>
      <button>Track</button>
      <button>ProCh</button>
    </InspectorTabs>
    <Strips>
      <StripCol>
        <Sect $grow $pad="0 3px 2px"><Knob name="Gain" arc /></Sect>
        <Sect $min={118} />
        <Sect $pad="0 3px 4px">
          <FxHead><Power c="#cd8843" s={10} />FX<Plus c="#85888a" s={8} /></FxHead>
          <FxSlot />
        </Sect>
        <Sect $gap={4} $pad="3px 2px 11px">
          <Select badge="C" value="1JBrdgRFXN" label="Channel" $dim />
          <Select badge="B" value="None" label="Bank" $dim />
          <Select badge="P" value="None" label="Patch" $dim />
        </Sect>
        <Sect $gap={4} $pad="3px 3px 1px">
          <Line $gap={4} $justify="flex-end">
            <Pad $tone="lit">R</Pad>
            <Pad>W<Trim>T</Trim></Pad>
          </Line>
          <Line $gap={4} $justify="space-between">
            <Pad>M</Pad>
            <Pad>S</Pad>
            <Pad $tone="red">Q</Pad>
            <Pad $tone="orange" aria-label="Input echo"><EchoAuto /></Pad>
          </Line>
          <Knob name="Pan" />
          <FaderArea>
            <FaderScale width="61" height="146">
              {faderMarks.map((m, i) => (
                <text key={m} x="14" y={13 + i * 16}>{m}</text>
              ))}
              {Array.from({ length: 33 }, (_, i) => (
                <path key={i} d={i % 4 ? `M19 ${10 + i * 4}h5` : `M18 ${10 + i * 4}h7`} stroke={i % 4 ? "#5d5f60" : "#a0a2a2"} />
              ))}
              <path d="M39 4v136" stroke="#17181a" strokeWidth="4" />
              <path d="M29 22h20v28H29z" fill="#5b5f60" stroke="#303233" />
              <path d="M30 25h18M30 47h18" stroke="#404344" />
              <path d="M30 36h18" stroke="#dff5ff" strokeWidth="3" />
            </FaderScale>
            <FaderMeter />
          </FaderArea>
          <MidiTile><Midi s={19} /></MidiTile>
        </Sect>
        <Sect $gap={2} $pad="0 3px 2px">
          <h3>In / Out</h3>
          <Select badge="I" value="AllInptsOm" label="Input" $dim />
          <Select badge="O" value="5JBrdgRFN1" label="Output" $dim />
        </Sect>
        <Sect $pad="2px 3px 7px">
          <StripName>JBridgeReFXNexs</StripName>
          <StripNumber>4</StripNumber>
        </Sect>
      </StripCol>
      <StripCol>
        <Sect $grow />
        <Sect $pad="1px 1px 2px">
          <Line $justify="space-between">
            <Knob name="Chr" angle={-150} />
            <Knob name="Rev" angle={-150} />
          </Line>
        </Sect>
        <Sect $gap={3}>
          <h3>Snap To Scale</h3>
          <Line $gap={4}>
            <Select value="C" label="Root" $dim $grow />
            <Pad aria-label="Snap to scale"><Power /></Pad>
          </Line>
          <Select value="Chromatic" $dim />
        </Sect>
        <Sect $gap={3} $pad="1px 3px 5px">
          <h3>Input Quantize</h3>
          <Line $gap={4}>
            <Select value="1/16" $dim $grow />
            <Pad $tone="orange" aria-label="Quantize"><Power c="#1d1d1d" /></Pad>
          </Line>
        </Sect>
        <Sect $gap={3} $pad="1px 3px 5px">
          <h3>Arpeggiator</h3>
          <Line $gap={4}>
            <Pad $w={68}>Latch</Pad>
            <Pad aria-label="Arpeggiator"><Power /></Pad>
          </Line>
          <Line $gap={4}>
            <Select value="Presets..." $dim $grow />
            <Spin>
              <button aria-label="Previous preset"><Tri s={5} c="#c6c8c8" /></button>
              <button aria-label="Next preset"><Tri dir="down" s={5} c="#c6c8c8" /></button>
            </Spin>
          </Line>
          <Select value="1/16 notes" $dim />
          <Select value="2 octaves" $dim />
          <ArpSliders $gap={4}>
            <Slider name="Vel" value="100%" to={100} />
            <Slider name="Swing" value="0%" to={0} />
            <Slider name="Dur" value="99.5%" to={49} />
            <Slider name="Pitch" value="0" />
            <Slider name="Flam" value="0.0%" to={0} />
          </ArpSliders>
          <Knob name="Mix" angle={-150} />
          <Select value="Ch: 1" $dim />
          <Select value="Forward" $dim />
        </Sect>
        <Sect $gap={3} $pad="3px 3px 15px">
          <Slider name="Key+" value="0" from={48} to={52} />
          <Slider name="Time +" value="0" to={0} />
          <Patch>Patch Browser...</Patch>
          <Select value="Normal" $dim />
        </Sect>
      </StripCol>
    </Strips>
  </Inspector>
);

/* ---------- track view ---------- */

const TrackView = styled.main`
  flex: 1;
  min-width: 0;
  display: flex;
  flex-direction: column;
  border-radius: 6px;
  background: #4a4b4c;
`;

const ViewMenu = styled.div`
  height: 20px;
  display: flex;
  padding-left: 5px;
  border-bottom: 1px solid #2b2c2d;
  border-radius: 6px 6px 0 0;
  background: linear-gradient(#5d5f61, #4e5051);
  button {
    width: 79px;
    display: flex;
    align-items: center;
    padding: 0 4px 0 0;
    border-left: 1px solid #727475;
    border-right: 1px solid #2b2c2d;
    color: #b4b6b6;
    font-size: 12px;
    line-height: 16px;
  }
  span {
    flex: 1;
    padding-right: 5px;
  }
`;

const RulerBar = styled.div`
  height: 45px;
  display: flex;
  align-items: flex-start;
  padding: 7px 4px 0 5px;
`;

const NowTime = styled.output`
  width: 154px;
  height: 24px;
  flex: none;
  border: 1px solid #242526;
  border-radius: 2px;
  background: #39393a;
  color: #aeb6bd;
  font: bold 20px/22px ${arial};
  text-align: center;
`;

const RulerLead = styled.div`
  width: 552px;
  flex: none;
  display: flex;
  gap: 6px;
`;

const ZoomPreset = styled(SelectBox)`
  width: 115px;
  height: 24px;
  margin-left: auto;
  margin-right: 24px;
  color: #b4b6b6;
`;

const Ruler = styled.svg`
  flex: 1;
  height: 42px;
  min-width: 0;
  margin-top: -5px;
  overflow: visible;
  text {
    font: 9px ${arial};
    fill: #cfcac4;
  }
`;

const RulerPlus = styled(Pad)`
  margin: 13px 0 0 2px;
`;

const Pane = styled.section`
  display: flex;
  flex: ${(p) => (p.$grow ? "1" : "0 0 200px")};
  min-height: 0;
  margin: ${(p) => (p.$grow ? "0 1px 5px" : "0 3px")};
  border: ${(p) => (p.$grow ? "2px solid #b0b0bb" : "0")};
  background: #4a4b4c;
`;

const Rows = styled.div`
  flex: 1;
  min-width: 0;
  display: flex;
  flex-direction: column;
  overflow: hidden;
`;

const Row = styled.div`
  display: flex;
  min-height: 0;
  flex: ${(p) => (p.$height ? `0 0 ${p.$height}px` : "1 1 0")};
`;

const ColorStrip = styled.b`
  width: 10px;
  flex: none;
  padding: 4px 0 0 1px;
  border-right: 2px solid #1a1b1b;
  border-top: 1px solid #6c4a4a;
  background: ${(p) => (p.$on ? "#dd0c0c" : "#232425")};
  color: #f3d6d6;
  font: 9px/11px ${arial};
`;

const Header = styled.div`
  width: 521px;
  flex: none;
  display: flex;
  position: relative;
  padding-left: 7px;
  border-top: 1px solid #5a5c5d;
  border-bottom: 2px solid #17181a;
  border-right: 1px solid #17181a;
  background: #323334;
`;

const EmptyHead = styled.div`
  width: 531px;
  flex: none;
  background: #212121;
`;

const HeaderLeft = styled.div`
  width: ${(p) => (p.$bus ? 59 : 63)}px;
  flex: none;
  display: flex;
  flex-direction: column;
  justify-content: space-between;
  padding: 1px 4px 2px 2px;
  border-left: 1px solid #55585a;
`;

const TrackNumber = styled.span`
  width: 34px;
  height: 18px;
  margin-top: 1px;
  text-align: center;
  font-size: 12px;
  line-height: 18px;
  color: ${(p) => (p.$on ? "#16212b" : "#d8dada")};
  background: ${(p) => (p.$on ? "#3f9bdc" : "none")};
`;

const TrackIcon = styled.span`
  width: 20px;
  height: 20px;
  margin-left: 2px;
  display: flex;
  align-items: center;
  justify-content: center;
  border: ${(p) => (p.$framed ? "1px solid #85888a" : "0")};
`;

const BigIcon = styled.div`
  width: 47px;
  height: 47px;
  margin: 5px auto auto 6px;
  display: flex;
  align-items: center;
  justify-content: center;
  background: #28292a;
`;

const Controls = styled.div`
  display: grid;
  grid-template-columns: repeat(3, 92px);
  grid-template-rows: ${(p) => (p.$bus ? "20px 20px 20px" : "20px 21px 21px 20px")};
  gap: 4px 5px;
  align-items: start;
  align-content: start;
  padding-top: 1px;
`;

const NameInput = styled.input`
  width: 92px;
  height: 20px;
  padding: 0 3px;
  background: ${(p) => (p.$on ? "#e8bb78" : "#28292b")};
  outline: ${(p) => (p.$on ? "1px dashed #e4e6e6" : "none")};
  color: ${(p) => (p.$on ? "#1d1d1d" : "#66a3e0")};
  font: bold 11px/20px ${arial};
`;

const FxColumn = styled.div`
  width: 94px;
  margin-left: ${(p) => (p.$bus ? 37 : 33)}px;
  padding-bottom: 2px;
  display: flex;
  flex-direction: column;
`;

const Peak = styled.div`
  height: 25px;
  display: flex;
  justify-content: flex-end;
  gap: 6px;
  padding: 4px 2px 0;
  line-height: 14px;
`;

const FxBox = styled.div`
  flex: 1;
  border: 1px solid #222324;
  background: #2d2e2f;
  header {
    display: flex;
    align-items: center;
    gap: 5px;
    height: 15px;
    padding: 0 2px;
    background: #242526;
    color: #eceeee;
  }
  header span { flex: 1; }
`;

const Meter = styled.div`
  width: 12px;
  margin: 3px 1px 3px 5px;
  border-radius: 3px;
  background: #2a2b2c;
`;

const MeterScale = styled.div`
  width: 14px;
  display: flex;
  flex-direction: column;
  justify-content: space-between;
  padding: ${(p) => p.$pad};
  font: 9px/8px ${arial};
  color: #8b8e8f;
  text-align: right;
`;

const ScaleCol = styled.svg`
  width: 22px;
  height: 100%;
  margin-left: 1px;
  background: #4a4b4c;
  text {
    font: 9px ${ui};
    fill: #737677;
    text-anchor: end;
  }
`;

const KeyName = styled.text`
  && {
    font-size: 9px;
    fill: #121226;
    font-weight: bold;
  }
`;

const LaneBox = styled.div`
  flex: 1;
  min-width: 0;
  position: relative;
  overflow: hidden;
  border-left: 1px solid #fff;
  border-bottom: ${(p) => (p.$empty ? 0 : 2)}px solid #1c1d1e;
  background: ${(p) => p.$bg};
`;

const LaneSvg = styled.svg`
  position: absolute;
  inset: 0;
  width: 100%;
  height: 100%;
`;

// one bar covers four beats of four steps
const BAR = 180.6;
const grid = Array.from({ length: 96 }, (_, i) => ({
  i,
  x: Math.round((i * BAR) / 16) - 1,
}));

const Grid = ({ bands }) => (
  <>
    {bands && grid.filter((g) => g.i % 8 === 4).map((g) => (
      <rect key={g.i} x={g.x} y="0" width="45" height="100%" fill="#5c5c7c" opacity="0.1" />
    ))}
    {grid.slice(1).map(({ i, x }) => (
      <rect
        key={i}
        x={x}
        y="0"
        width="1"
        height="100%"
        fill="#0e1012"
        opacity={i % 16 === 0 ? 0.85 : i % 4 === 0 ? 0.4 : 0.18}
      />
    ))}
  </>
);

const notes = [
  [0, 21, 677],
  [0, 47, 168],
  [168, 42, 187],
  [362, 47, 177],
  [530, 42, 142],
  [0, 69, 677],
];

const Clip = () => (
  <>
    <defs>
      <linearGradient id="clip" x1="0" y1="0" x2="0" y2="1">
        <stop offset="0" stopColor="#968689" />
        <stop offset="1" stopColor="#837274" />
      </linearGradient>
    </defs>
    <rect width="677" height="180" fill="url(#clip)" />
    {notes.map(([x, y, w]) => (
      <rect key={`${x}-${y}`} x={x} y={y} width={w} height="4" fill="#d0753a" />
    ))}
    <path d="M0 0.5h677" stroke="#efd2c8" />
    <path d="M0 179.5h677" stroke="#b9a2a2" />
    <path d="M661 1v15" stroke="#6a5a5c" />
    <path d="M664 4h8M671 7h4M664 11h4" stroke="#33211f" strokeWidth="2" />
  </>
);

const dbScale = [[13, "-3"], [22, "-6"], [31, "-9"], [49, "dB"], [66, "-9"], [75, "-6"], [84, "-3"]];

const Scale = ({ kind, height }) => {
  if (kind === "midi")
    return (
      <ScaleCol>
        {[120, 108, 96, 84, 72, 60, 48, 36, 24].map((n, i) => (
          <g key={n}>
            <text x="17" y={16 + i * 9}>{n}</text>
            <path d={`M2 ${17.5 + i * 9}h18`} stroke="#85888a" />
          </g>
        ))}
        <path d="M2 7.5h18" stroke="#85888a" />
      </ScaleCol>
    );
  if (kind === "keys")
    return (
      <ScaleCol>
        <rect x="2" y="1" width="18" height="180" fill="#fffff0" />
        {[13, 24, 35, 52, 63, 80, 92, 103, 120, 131, 148, 159, 170].map((y) => (
          <path key={y} d={`M3 ${y}h13v5H3zM16 ${y + 2}h4v1h-4z`} fill="#121226" />
        ))}
        {[8, 46, 74, 113, 142].map((y) => (
          <path key={y} d={`M3 ${y + 0.5}h17`} stroke="#121226" />
        ))}
        <KeyName x="19" y="8">C 6</KeyName>
        <KeyName x="19" y="75">C 5</KeyName>
        <KeyName x="19" y="143">C 4</KeyName>
      </ScaleCol>
    );
  if (kind === "bus")
    return (
      <ScaleCol>
        <path d="M2 0.5h18" stroke="#85888a" />
        {[18, 53].map((y) => (
          <g key={y}>
            <text x="17" y={y + 3}>dB</text>
            <path d={`M17 ${y + 0.5}h3`} stroke="#111" />
          </g>
        ))}
      </ScaleCol>
    );
  return (
    <ScaleCol>
      {(height > 150 ? [0, 89] : [0]).map((off) =>
        dbScale.map(([y, t]) => (
          <text key={off + y} x="17" y={y + off + 3}>{t}</text>
        ))
      )}
      {(height > 150 ? [49, 138] : [49]).map((y) => (
        <path key={y} d={`M17 ${y + 0.5}h3`} stroke="#111" />
      ))}
    </ScaleCol>
  );
};

const Pointer = styled.svg`
  position: absolute;
  left: 102px;
  top: 37px;
  z-index: 1;
  pointer-events: none;
`;

const fullDb = ["-6", "-12", "-18", "-24", "-30", "-36", "-42", "-48", "-54"];
const busDb = ["-6", "-18", "-30", "-42", "-54"];

const tracks = [
  {
    id: "1", name: "Audio", height: 100, icon: <AudioWave />, db: fullDb, dbPad: "12px 0 11px",
    input: "-None-", output: "Master", audio: true, bg: "#62676b",
  },
  {
    id: "2", name: "MIDI", height: 100, icon: <Midi />, input: "None", output: "1IOMDVS...",
    channel: "None", scale: "midi", bg: "#474e56",
  },
  {
    id: "3", name: "[jBridge]reFX Nexus", height: 182, icon: <Synth s={16} />, framed: true,
    big: <Synth s={34} />, db: fullDb, dbPad: "20px 0 19px", peak: "-6.7",
    input: "JBrdRN1...", output: "Master", audio: true, wave: true, bg: "#62676b",
  },
  {
    id: "4", name: "[jBridge]reFX Nexus", height: 182, icon: <Midi />, framed: true, on: true,
    big: <Midi s={30} />, input: "AllInptsOm", output: "5JBrdgRF...", channel: "1JBrdgRF...",
    scale: "keys", bg: "#5c4e4c",
  },
];

const buses = [
  { id: "A", name: "Master", peak: "-6.7", output: "StrVS700...", focus: true, bg: "#62676b" },
  { id: "B", name: "Metronome", output: "Master", bg: "#474e56" },
  { id: "C", name: "Preview", output: "Master", bg: "#62676b" },
];

const FxSide = ({ peak, bus, db, pad }) => (
  <>
    <FxColumn $bus={bus}>
      <Peak>{peak}<Collapse /></Peak>
      <FxBox>
        <header><Power c="#cd8843" s={10} /><span>FX</span><Plus c="#85888a" s={8} /></header>
      </FxBox>
    </FxColumn>
    <Meter />
    <MeterScale $pad={pad}>{db && db.map((d) => <span key={d}>{d}</span>)}</MeterScale>
  </>
);

const Track = ({ t }) => {
  const midi = !t.audio;
  return (
    <Row $height={t.height}>
      <ColorStrip $on>{t.id}</ColorStrip>
      <Header>
        <HeaderLeft>
          <Line>
            <TrackNumber $on={t.on}>{t.id}</TrackNumber>
            <TrackIcon $framed={t.framed}>{t.icon}</TrackIcon>
          </Line>
          {t.big && <BigIcon>{t.big}</BigIcon>}
          <Line $gap={4}>
            <Pad $tone={t.on && "brown"} aria-label="Take lanes"><Lanes c={t.on ? "#3c3128" : undefined} /></Pad>
            <Pad aria-label="Automation lanes"><Envelope /></Pad>
          </Line>
        </HeaderLeft>
        <Controls>
          <NameInput $on={t.on} aria-label="Track name" defaultValue={t.name} />
          <Line $gap={4}>
            <Pad>M</Pad>
            <Pad>S</Pad>
            {t.on ? <Pad $tone="red">Q</Pad> : <Pad aria-label="Record"><RecDot /></Pad>}
            <Pad $tone={t.on && "orange"} aria-label="Input echo">
              {t.on ? <EchoAuto /> : t.wave ? <Wave /> : <Echo />}
            </Pad>
          </Line>
          <Select value="Clips" />

          <Line $gap={4}>
            <Pad $tone="lit">R</Pad>
            <Pad>W<Trim>T</Trim></Pad>
            <Pad $tone={t.id === "2" && "off"} aria-label="Freeze"><Star c={t.id === "2" ? "#6c6f70" : undefined} /></Pad>
            <Pad>A</Pad>
          </Line>
          <Slider name="Volume" value={midi ? "(101)" : "0.0"} to={78} />
          <Slider name="Pan" value={midi ? "(0% C)" : "0% C"} from={48} to={52} />

          <Slider name={midi ? "Vel+" : "Gain"} value={midi ? "0" : "0.0"} />
          <Select badge="I" value={t.input} label="Input" $h={18} />
          <Select badge="O" value={t.output} label="Output" $h={18} />

          {midi ? (
            <>
              <Select badge="C" value={t.channel} label="Channel" $h={18} />
              <Select badge="B" value="None" label="Bank" $h={18} />
              <Select badge="P" value="None" label="Patch" $h={18} />
            </>
          ) : (
            <Line $gap={4}>
              <Pad aria-label="Interleave"><Interleave /></Pad>
              <Pad aria-label="Phase"><Phase /></Pad>
            </Line>
          )}
        </Controls>
        <FxSide peak={t.peak} db={t.db} pad={t.dbPad} />
        {t.on && (
          <Pointer width="52" height="122" viewBox="0 0 52 122">
            <path d="M25 5L47 62H37v55H14V62H3z" fill="none" stroke="#fff200" strokeWidth="4" strokeLinejoin="round" />
          </Pointer>
        )}
      </Header>
      <Scale kind={t.scale} height={t.height} />
      <LaneBox $bg={t.bg}>
        <LaneSvg>
          {t.on && <Clip />}
          <Grid bands={!t.on} />
          {t.on && <path d="M677.5 0v180" stroke="#241f20" />}
        </LaneSvg>
      </LaneBox>
    </Row>
  );
};

const BusEnv = styled(Pad)`
  margin-right: 8px;
`;

const BusTrack = ({ b }) => (
  <Row $height={73}>
    <ColorStrip $on={b.id === "A"}>{b.id === "A" && "1"}</ColorStrip>
    <Header>
      <HeaderLeft $bus>
        <Line>
          <TrackNumber>{b.id}</TrackNumber>
          <Bus />
        </Line>
        <Line $justify="flex-end">
          <BusEnv aria-label="Automation lanes"><Envelope /></BusEnv>
        </Line>
      </HeaderLeft>
      <Controls $bus>
        <NameInput aria-label="Bus name" defaultValue={b.name} />
        <Line $gap={4}>
          <Pad>M</Pad>
          <Pad>S</Pad>
          <Pad aria-label="Waveform preview"><Wave /></Pad>
        </Line>
        <Select value="None" />
        <Line $gap={4}>
          <Pad $tone="lit">R</Pad>
          <Pad>W<Trim>T</Trim></Pad>
        </Line>
        <Slider name="OutptVlm" value="0.0" to={78} />
        <Slider name="Output P..." value="0% C" from={48} to={52} />
        <Slider name="Input Gain" value="0.0" to={78} />
        <Slider name="Input Pan" value="0% C" from={48} to={52} />
        <Select badge="O" value={b.output} label="Output" $h={18} $focus={b.focus} />
      </Controls>
      <FxSide bus peak={b.peak} db={busDb} pad="9px 0 8px" />
    </Header>
    <Scale kind="bus" />
    <LaneBox $bg={b.bg}><LaneSvg><Grid bands /></LaneSvg></LaneBox>
  </Row>
);

const ScrollCol = styled.div`
  width: 16px;
  flex: none;
  display: flex;
  flex-direction: column;
  align-items: center;
  gap: 4px;
  padding: 3px 0 2px;
`;

const Thumb = styled.div`
  width: 14px;
  height: ${(p) => p.$size};
  background: #bebebe;
`;

const Trough = styled.div`
  flex: 1;
  min-height: 0;
`;

const ZoomBox = styled.span`
  width: 11px;
  height: 7px;
  background: #c3c3c3;
  outline: 1px solid #3a3b3c;
`;

const VScroll = ({ size }) => (
  <ScrollCol>
    <Tri s={9} />
    <Trough><Thumb $size={size} /></Trough>
    <Tri dir="down" s={9} />
    <Zoom />
    <ZoomBox />
    <Zoom inside />
  </ScrollCol>
);

const BottomBar = styled.div`
  height: 23px;
  display: flex;
  align-items: center;
  padding: 0 23px 2px 515px;
`;

const HScroll = styled.div`
  flex: 1;
  display: flex;
  align-items: center;
  gap: 7px;
  padding-left: 27px;
`;

const HZoom = styled.div`
  display: flex;
  align-items: center;
  gap: 4px;
`;

const HThumb = styled.div`
  width: 15px;
  height: 16px;
  background: #bebebe;
`;

const viewMenus = ["View", "Options", "Tracks", "Clips", "MIDI", "Region FX"];

const TrackPanel = () => (
  <TrackView>
    <ViewMenu>
      {viewMenus.map((m) => (
        <button key={m}><span>{m}</span><Tri dir="down" s={6} c="#b4b6b6" /></button>
      ))}
    </ViewMenu>
    <RulerBar>
      <RulerLead>
        <NowTime>1:01:000</NowTime>
        <Pad $w={24} $h={24} $tone="dark" aria-label="Add track"><Plus c="#c3c5c5" s={12} /></Pad>
        <Pad $w={24} $h={24} $tone="dark" aria-label="Duplicate track">
          <svg width="16" height="16" viewBox="0 0 16 16" fill="none" stroke="#b4b6b6">
            <path d="M3 11.5H0.5v-11h10V3M4.5 4.5h11v11h-11z" />
            <path d="M10 7v6M7 10h6" strokeWidth="2" />
          </svg>
        </Pad>
        <ZoomPreset $dark>
          <select aria-label="Time ruler preset"><option>Custom</option></select>
          <Down s={8} c="#9a9c9c" />
        </ZoomPreset>
      </RulerLead>
      <Ruler>
        <rect x="0" y="3" width="100%" height="30" fill="#404443" stroke="#8b8d8c" />
        <rect x="0" y="14" width="678" height="12" fill="#c1bcba" />
        <path d="M0 26.5h678" stroke="#84866e" />
        <path d="M678 26.5h127" stroke="#77788e" />
        {grid.filter((g) => g.i % 4 === 0 && g.i && g.i < 72).map((g) => (
          <path key={g.i} d={`M${g.x + 0.5} 22v4`} stroke="#8a8b78" />
        ))}
        {[1, 2, 3, 4, 5].map((n, i) => (
          <text key={n} x={Math.round(i * BAR) + 2} y="22" fillOpacity={n > 4 ? 0.2 : 1}>{n}</text>
        ))}
        <path d="M0.5 12v32" stroke="#fff" />
        <path d="M-11 0h22v9q0 2-3 3L0 15l-8-3q-3-1-3-3z" fill="#c0c4c7" stroke="#7d8082" />
        <path d="M-3 3h6v7h-6z" fill="#2b2c2d" />
      </Ruler>
      <RulerPlus $w={14} $h={14} $tone="dark" aria-label="Add ruler"><Plus s={10} /></RulerPlus>
    </RulerBar>

    <Pane $grow>
      <Rows>
        {tracks.map((t) => <Track key={t.id} t={t} />)}
        <Row>
          <EmptyHead />
          <ScaleCol><path d="M2 1.5h18" stroke="#85888a" /></ScaleCol>
          <LaneBox $empty $bg="#212125" />
        </Row>
      </Rows>
      <VScroll size="71%" />
    </Pane>
    <Pane>
      <Rows>
        {buses.map((b) => <BusTrack key={b.id} b={b} />)}
      </Rows>
      <VScroll size="64%" />
    </Pane>
    <BottomBar>
      <Pad $tone="dark" aria-label="Show buses">
        <svg width="9" height="11" fill="#e4e6e6"><path d="M0 0h9v3H0zM0 5h9l-4.5 5z" /></svg>
      </Pad>
      <HScroll>
        <Tri dir="left" s={8} />
        <HThumb />
        <Trough />
        <Tri dir="right" s={8} />
        <HZoom>
          <Zoom />
          <svg width="6" height="16"><path d="M0 0h6v16H0z" fill="#3f4142" /><path d="M0 10h6v6H0z" fill="#c3c3c3" /></svg>
          <Zoom inside />
        </HZoom>
      </HScroll>
    </BottomBar>
  </TrackView>
);

/* ---------- browser and synth rack ---------- */

const Browser = styled.aside`
  width: 302px;
  flex: none;
  display: flex;
  flex-direction: column;
  gap: 5px;
`;

const Card = styled.section`
  display: flex;
  flex-direction: column;
  flex: ${(p) => (p.$grow ? 1 : "none")};
  border-radius: 6px;
  background: #4a4c4b;
`;

const BrowserTabs = styled.div`
  height: 20px;
  display: flex;
  border-bottom: 1px solid #2b2c2d;
  border-radius: 6px 6px 0 0;
  background: linear-gradient(#5d5f61, #4a4c4d);
  button {
    display: flex;
    align-items: center;
    gap: 4px;
    padding: 0 3px;
    border-right: 2px solid #17181a;
    background: #424445;
    font: 11px/18px ${arial};
    color: #d4d6d6;
  }
`;

const TabArrow = styled.span`
  margin: 0 3px 0 5px;
`;

const HeadTools = styled.div`
  margin-left: auto;
  display: flex;
  align-items: center;
  gap: 5px;
  padding-right: 9px;
`;

const Filters = styled.div`
  display: flex;
  gap: 5px;
  padding: 4px 6px 5px;
`;

const Search = styled.div`
  display: flex;
  gap: 4px;
  padding: 0 3px 7px 5px;
  label {
    flex: 1;
    display: flex;
    align-items: center;
    height: 22px;
    padding-right: 4px;
    border-radius: 4px;
    background: #303031;
  }
  input { flex: 1; }
`;

const TreeFrame = styled.div`
  display: flex;
  height: 354px;
  margin: 0 6px;
  border: 4px solid #1f2020;
  border-bottom-width: 2px;
  background: #303031;
`;

const Tree = styled.ul`
  flex: 1;
  height: 348px;
  overflow: hidden;
  list-style: none;
  margin: 0;
  padding: 0 0 0 7px;
  font: 11px/18px ${segoe};
  li {
    display: flex;
    align-items: center;
    height: 18px;
    gap: 2px;
    color: #bdbfbf;
  }
  span { padding: 0 2px; }
  li:first-child span {
    background: #f3f3f3;
    color: #111;
  }
`;

const WhiteScroll = styled.div`
  width: 17px;
  display: flex;
  flex-direction: column;
  align-items: center;
  justify-content: space-between;
  padding: 6px 1px;
  background: #f0f0f0;
  div {
    width: 15px;
    height: 229px;
    margin: 5px 0 auto;
    background: #cdcdcd;
  }
`;

const Count = styled.p`
  margin: 0;
  padding: 0 5px;
  height: 22px;
  font: 11px/23px ${segoe};
  color: #b4b6b6;
`;

const Title = styled.h2`
  margin: 0;
  padding: 0 9px 0 ${(p) => (p.$open ? 6 : 9)}px;
  height: ${(p) => (p.$open ? 20 : p.$dock ? 25 : 27)}px;
  display: flex;
  align-items: center;
  justify-content: space-between;
  border-radius: 6px 6px 0 0;
  background: ${(p) => (p.$open ? "linear-gradient(#5d5f61, #4a4c4d)" : "none")};
  border-bottom: ${(p) => (p.$open ? "1px solid #2b2c2d" : "0")};
  font: bold 12px/18px ${ui};
  color: ${(p) => (p.$dock ? "#303234" : "#b9c0c3")};
`;

const RackTools = styled.div`
  display: flex;
  align-items: center;
  gap: 2px;
  padding: 1px 10px 1px 6px;
`;

const RackSelect = styled(SelectBox)`
  margin-left: 3px;
  padding-left: 1px;
  color: #b4b6b6;
`;

const RackList = styled.div`
  flex: 1;
  margin: 0 6px 1px;
  padding: 3px;
  background: #1f2020;
`;

const RackRow = styled.div`
  height: 35px;
  display: flex;
  align-items: center;
  gap: 2px;
  padding: 0 4px 0 7px;
  border-radius: 2px;
  background: linear-gradient(#5b5d5e, #4e5051);
`;

const RackTile = styled.span`
  width: 29px;
  height: 29px;
  display: flex;
  align-items: center;
  justify-content: center;
  border: 1px solid #141515;
  border-radius: 3px;
  background: #2d2e2f;
`;

const RackName = styled.input`
  flex: 1;
  min-width: 0;
  height: 29px;
  margin: 0 7px 0 5px;
  padding: 0 6px;
  border-radius: 4px;
  background: #1d1e20;
  color: #c9cbcb;
  font: bold 13px/29px ${arial};
`;

const RackMenu = styled.span`
  margin-right: 6px;
`;

const folders = [
  "Analyzer", "Channel Strip", "Delay", "Distortion", "Dynamics", "Effects", "EQ", "Filter",
  "Guitar", "Mastering", "Modulation", "Organ", "Other", "Pitch Shift", "Restoration", "Reverb",
  "Sound Field", "Spatial", "Spatial + Panner", "Surround",
];

const RightPanel = () => (
  <Browser>
    <Card>
      <BrowserTabs>
        <button aria-label="Media">
          <svg width="32" height="13" viewBox="0 0 32 13" fill="#77797a"><path d="M1 1h5l1 2h7v9H1z" /></svg>
        </button>
        <button>
          <svg width="16" height="15" viewBox="0 0 16 15" fill="none" stroke="#b4b6b6" strokeWidth="1.5">
            <path d="M1 14l2-4 6-8q2-2 4 0t-1 5l-7 6zM6 8l3 3" />
          </svg>
          PlugIns
          <TabArrow><Down s={7} c="#77797a" /></TabArrow>
        </button>
        <button aria-label="Notes">
          <svg width="32" height="15" viewBox="0 0 32 15" fill="none" stroke="#85888a" strokeWidth="1.5">
            <path d="M1 1h10M1 4h8M1 7h6M1 10h5M1 13h9M14 2L8 12" />
          </svg>
        </button>
        <HeadTools><Windows /><Down /><Chevrons right /></HeadTools>
      </BrowserTabs>
      <Filters>
        <Pad $w={72} $tone="orange">Audio FX</Pad>
        <Pad $w={26} $tone="dark" aria-label="MIDI FX">
          <svg width="17" height="16" viewBox="0 0 17 16">
            <path d="M5 1C2 1 1 3 1 6s1 4 2 5h4c2-1 3-3 3-5S8 1 5 1z" fill="#dcdede" />
            <path d="M8.5 15V9.5H12M8.5 12H11M12 9l4 6M16 9l-4 6" stroke="#2c2f30" strokeWidth="3" fill="none" />
            <path d="M8.5 15V9.5H12M8.5 12H11M12 9l4 6M16 9l-4 6" stroke="#dcdede" strokeWidth="1.3" fill="none" />
          </svg>
        </Pad>
        <Pad $w={26} $tone="dark" aria-label="Instruments">
          <svg width="14" height="14" viewBox="0 0 14 14">
            <path d="M0 0h14v14H0z" fill="#dcdede" />
            <path d="M1.5 3.5h11v9h-11z" stroke="#2c2f30" fill="none" />
            <path d="M4.5 4v6M7.5 4v6M10.5 4v6" stroke="#2c2f30" strokeWidth="1.5" />
          </svg>
        </Pad>
        <Pad $w={26} $tone="dark" aria-label="ReWire">
          <svg width="15" height="12" viewBox="0 0 15 12" fill="none" stroke="#dcdede" strokeWidth="2.4">
            <path d="M0 1.5h4l7 9h4M0 10.5h4l7-9h4M0 6h5M10 6h5" />
          </svg>
        </Pad>
      </Filters>
      <Search>
        <label>
          <input type="text" aria-label="Search plug-ins" />
          <svg width="16" height="14" viewBox="0 0 16 14" fill="none" stroke="#85888a" strokeWidth="2">
            <circle cx="6" cy="5" r="3.5" />
            <path d="M8.5 7.5l5 5" />
          </svg>
        </label>
        <Pad $w={26} $h={22} $tone="dark" aria-label="Clear"><Cross /></Pad>
      </Search>
      <TreeFrame>
        <Tree>
          {folders.map((f, i) => (
            <li key={f}>
              <svg width="14" height="18" viewBox="0 0 14 18">
                <path d="M4.5 0v18M9 9.5h5" stroke="#77797a" strokeDasharray="1 1" />
                <rect x="0.5" y="5.5" width="8" height="8" fill="#f3f3f3" stroke="#9a9c9c" />
                <path d="M4.5 7v5M2 9.5h5" stroke="#24408e" />
              </svg>
              <Folder open={!i} />
              <span>{f}</span>
            </li>
          ))}
        </Tree>
        <WhiteScroll>
          <svg width="8" height="6" fill="none" stroke="#505050" strokeWidth="2"><path d="M0 5l4-4 4 4" /></svg>
          <div />
          <svg width="8" height="6" fill="none" stroke="#505050" strokeWidth="2"><path d="M0 1l4 4 4-4" /></svg>
        </WhiteScroll>
      </TreeFrame>
      <Count>294 Plug-ins</Count>
    </Card>

    <Card><Title>HELP MODULE<Collapse down /></Title></Card>

    <Card $grow>
      <Title $open>
        <Line $gap={7}>SYNTH RACK <Down s={8} /></Line>
        <Line $gap={6}><Windows /><Down s={8} /><Collapse down /></Line>
      </Title>
      <RackTools>
        <Pad $w={26} $h={26} $tone="dark" aria-label="Add synth"><Plus c="#c3c5c5" /></Pad>
        <Pad $w={26} $h={26} $tone="dark" aria-label="Delete synth"><Cross /></Pad>
        <Pad $w={26} $h={26} $tone="dark" aria-label="Properties">
          <svg width="16" height="12" viewBox="0 0 16 12" fill="none" stroke="#c3c5c5">
            <path d="M0.5 0.5h15v11H0.5zM3 4h1M3 6.5h1M3 9h1M5.5 4H13M5.5 6.5H13M5.5 9H13" />
          </svg>
        </Pad>
        <Pad $w={26} $h={26} $tone="dark" aria-label="Show controls">
          <svg width="20" height="20" viewBox="0 0 20 20" fill="none" stroke="#c3c5c5">
            <circle cx="6.5" cy="6" r="4" fill="#9a9c9c" />
            <path d="M2 11a6 6 0 1 1 9.5 0M6.5 2v4M6.5 12.5h13v7h-13zM9 15h1M9 17.5h1M11.5 15H17M11.5 17.5H17" />
          </svg>
        </Pad>
        <RackSelect $dark $grow>
          <select aria-label="Synth preset"><option>JBRN1POS</option></select>
          <Down s={8} />
        </RackSelect>
      </RackTools>
      <RackList>
        <RackRow>
          <RackTile><Synth s={23} /></RackTile>
          <RackName aria-label="Synth name" defaultValue="[jBridge]reFX Nex..." />
          <RackMenu><Tri dir="down" s={6} c="#c3c5c5" /></RackMenu>
          <Pad>M</Pad>
          <Pad>S</Pad>
          <Pad aria-label="Freeze"><Star /></Pad>
        </RackRow>
      </RackList>
    </Card>
  </Browser>
);

/* ---------- page ---------- */

const Page = styled.div`
  min-height: 100vh;
  display: flex;
  flex-direction: column;
  position: relative;
`;

const Work = styled.div`
  flex: 1;
  display: flex;
  gap: 6px;
  padding: 0 1px 0 2px;
`;

const Center = styled.div`
  flex: 1;
  min-width: 0;
  display: flex;
  flex-direction: column;
  gap: 5px;
`;

const Top = styled.div`
  flex: 1;
  display: flex;
  gap: 5px;
`;

const Dock = styled.footer`
  border-radius: 6px;
  background: #4a4c4b;
`;

const DesktopEdge = styled.div`
  height: 5px;
  border-top: 3px solid #262728;
  background: #4d6264;
`;

const FloatWindow = styled.div`
  position: absolute;
  left: 0;
  bottom: 1px;
  width: 160px;
  height: 23px;
  display: flex;
  align-items: center;
  gap: 12px;
  padding: 0 7px 0 10px;
  border: 1px solid #bdbdbd;
  background: #f0f0f0;
  color: #222;
  font: 11px/20px ${segoe};
  span { margin: 0 0 0 -6px; }
  button {
    width: 36px;
    height: 16px;
    margin: -4px 0 0 -6px;
    background: #bcbcbc;
    display: flex;
    align-items: center;
    justify-content: center;
  }
`;

const App = () => (
  <Page>
    <GlobalStyle />
    <TitleBar>
      <AppIcon />
      <h1>Cakewalk - [Untitled Project1 * - Track]</h1>
      <CloseStub />
    </TitleBar>
    <Menu />
    <ControlBar />
    <Work>
      <InspectorPane />
      <Center>
        <Top>
          <TrackPanel />
          <RightPanel />
        </Top>
        <Dock>
          <Title $dock>MULTIDOCK<Collapse /></Title>
        </Dock>
      </Center>
    </Work>
    <DesktopEdge />
    <FloatWindow>
      <svg width="15" height="15" viewBox="0 0 15 15">
        <path d="M0 0h15v15H0z" fill="#bdbdbd" />
        <path d="M2 6V2h4M2 4h3M8 2l4 4M12 2L8 6M1 9h13M1 12h13" stroke="#222" fill="none" strokeDasharray="3 1" />
      </svg>
      <span>[jBrid...</span>
      <svg width="10" height="9" viewBox="0 0 10 9" fill="none" stroke="#222">
        <path d="M3 2V0.5h6v5H7.5M0.5 3h6v5.5h-6z" />
      </svg>
      <svg width="9" height="8" viewBox="0 0 9 8" fill="none" stroke="#999"><path d="M0.5 0.5h8v7h-8zM0 1.5h9" /></svg>
      <button aria-label="Close">
        <svg width="7" height="7" stroke="#fff" strokeWidth="1.5"><path d="M0 0l7 7M7 0L0 7" /></svg>
      </button>
    </FloatWindow>
  </Page>
);

export default App;
